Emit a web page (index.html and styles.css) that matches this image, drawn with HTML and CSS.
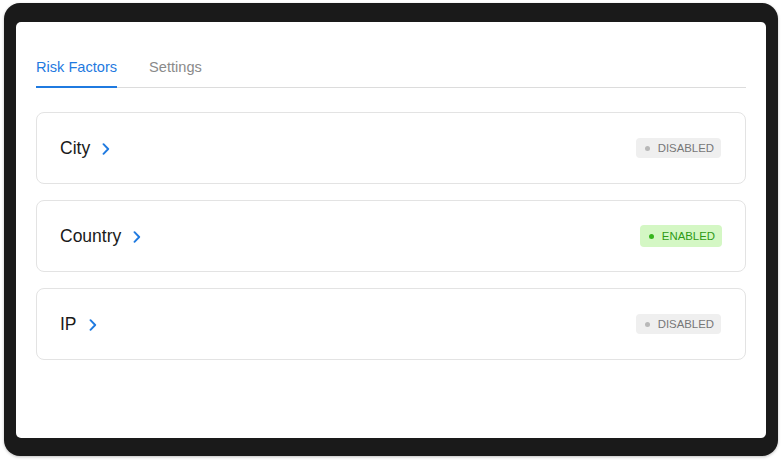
FILE: index.html
```html
<!DOCTYPE html>
<html>
<head>
<meta charset="utf-8">
<link rel="stylesheet" href="styles.css">
</head>
<body>
<div class="frame">
  <div class="screen">
    <nav class="tabs">
      <a class="tab active">Risk Factors</a>
      <a class="tab">Settings</a>
    </nav>
    <div class="list">
      <div class="card">
        <div class="title">City
          <svg class="chev" width="8" height="12" viewBox="0 0 8 12"><path d="M1.5 1.2 L6.2 6 L1.5 10.8" fill="none" stroke="#1f7ae0" stroke-width="1.9" stroke-linecap="round" stroke-linejoin="round"/></svg>
        </div>
        <span class="badge off"><i class="dot"></i>DISABLED</span>
      </div>
      <div class="card">
        <div class="title">Country
          <svg class="chev" width="8" height="12" viewBox="0 0 8 12"><path d="M1.5 1.2 L6.2 6 L1.5 10.8" fill="none" stroke="#1f7ae0" stroke-width="1.9" stroke-linecap="round" stroke-linejoin="round"/></svg>
        </div>
        <span class="badge on"><i class="dot"></i>ENABLED</span>
      </div>
      <div class="card">
        <div class="title">IP
          <svg class="chev" width="8" height="12" viewBox="0 0 8 12"><path d="M1.5 1.2 L6.2 6 L1.5 10.8" fill="none" stroke="#1f7ae0" stroke-width="1.9" stroke-linecap="round" stroke-linejoin="round"/></svg>
        </div>
        <span class="badge off"><i class="dot"></i>DISABLED</span>
      </div>
    </div>
  </div>
</div>
</body>
</html>
```
FILE: styles.css
```css
* { box-sizing: border-box; }
html, body { margin: 0; background: #ffffff; }
body {
  padding: 3px 4px 5px 4px;
  font-family: "Liberation Sans", Arial, sans-serif;
}
.frame {
  background: #1a1a1a;
  border-radius: 16px;
  padding: 19px 12px 18px 12px;
  height: 453px;
  box-shadow: 0 1px 3px rgba(0,0,0,0.25);
}
.screen {
  background: #ffffff;
  border-radius: 5px;
  height: 100%;
  padding: 0 20px;
}
.tabs {
  display: flex;
  gap: 32px;
  padding-top: 37px;
  border-bottom: 1px solid #dcdcdc;
}
.tab {
  font-size: 14.6px;
  color: #8a8a8a;
  padding-bottom: 10px;
  line-height: 17px;
  border-bottom: 2px solid transparent;
  margin-bottom: -1px;
}
.tab.active {
  color: #1f7ae0;
  border-bottom-color: #1f7ae0;
}
.list {
  display: flex;
  flex-direction: column;
  gap: 16px;
  padding-top: 24px;
}
.card {
  height: 72px;
  border: 1px solid #e3e3e3;
  border-radius: 8px;
  display: flex;
  align-items: center;
  justify-content: space-between;
  padding: 0 24px 0 23px;
}
.title {
  font-size: 17.5px;
  color: #1a1a1a;
  display: flex;
  align-items: center;
  gap: 12px;
}
.chev { display: block; margin-top: 1px; }
.badge {
  display: inline-flex;
  align-items: center;
  height: 20px;
  border-radius: 4px;
  padding: 0 7px 0 9px;
  font-size: 11.4px;
  gap: 8px;
}
.badge .dot {
  width: 5px;
  height: 5px;
  border-radius: 50%;
  display: block;
}
.badge.off { background: #efefef; color: #777777; }
.badge.off .dot { background: #b8b8b8; }
.badge.on { background: #d4f7c4; color: #2f9a14; height: 22px; margin-right: -1px; }
.badge.on .dot { background: #36b51c; }
```
